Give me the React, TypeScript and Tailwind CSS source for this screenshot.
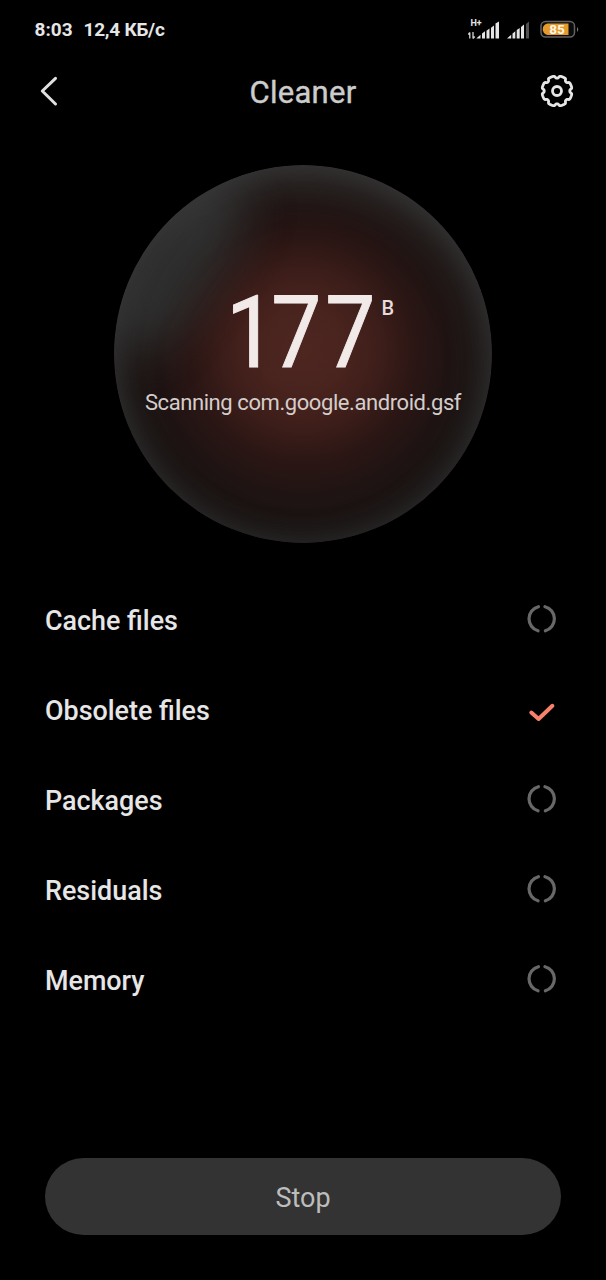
const items = [
    { name: "Cache files", done: false },
    { name: "Obsolete files", done: true },
    { name: "Packages", done: false },
    { name: "Residuals", done: false },
    { name: "Memory", done: false },
];

// Ring with eight wide teeth and narrow notches
function gearPath() {
    const points: string[] = [];
    for (let i = 0; i < 240; i++) {
        const a = (i / 240) * Math.PI * 2;
        const wave = Math.tanh((0.5 - Math.cos(a * 8)) * 3);
        const r = 13.9 + wave * 1.2;
        points.push(`${(18 + r * Math.sin(a)).toFixed(2)} ${(18 - r * Math.cos(a)).toFixed(2)}`);
    }
    return `M${points.join("L")}Z`;
}

function GearIcon() {
    return (
        <svg width="36" height="36" viewBox="0 0 36 36" fill="none" stroke="#e6e6e6" strokeWidth="2.8" strokeLinejoin="round">
            <path d={gearPath()} />
            <circle cx="18" cy="18" r="4.5" />
        </svg>
    );
}

function BackIcon() {
    return (
        <svg width="36" height="36" viewBox="0 0 36 36" fill="none" stroke="#e0e0e0" strokeWidth="3" strokeLinecap="round" strokeLinejoin="round">
            <path d="M24.5 5.3L11.3 18L24.5 31" />
        </svg>
    );
}

function SpinnerIcon() {
    return (
        <svg width="30" height="30" viewBox="0 0 30 30" fill="none" stroke="#686868" strokeWidth="3.2" strokeLinecap="round">
            <path d="M11.4 1.7A12.5 12.5 0 0 0 11 25.8" />
            <path d="M18 1.7A12.5 12.5 0 0 1 18.4 25.8" />
        </svg>
    );
}

function CheckIcon() {
    return (
        <svg width="30" height="30" viewBox="0 0 30 30" fill="none" stroke="#f9806b" strokeWidth="4">
            <path d="M4.3 17.5L11.6 24L25.4 10.8" strokeLinecap="round" strokeLinejoin="round" />
        </svg>
    );
}

function StatusIcons() {
    return (
        <svg width="116" height="28" viewBox="0 0 116 28" fill="#e4e4e4">
            <text x="2.5" y="10" fontSize="9" fontWeight="700" fontFamily="Roboto, sans-serif">H+</text>
            <path d="M1.8 22.5V16.5M0.3 18.5L1.8 16.5M5 16V22.5M5 22.5L6.7 20.5" fill="none" stroke="#d5d5d5" strokeWidth="1.3" />
            <path d="M8.3 22.5L12.5 18.8V22.5zM14 22.5V17.5L17 15.3V22.5zM18.5 22.5V14.8L21.5 12.5V22.5zM23 22.5V11.8L26 9.5V22.5zM27.5 22.5V7.5L31 5.5V22.5z" />
            <path d="M39 22.5L43.2 18.8V22.5zM44.5 22.5V17.5L47.3 15.3V22.5zM48.7 22.5V14L51.7 12V22.5zM53 22.5V11L56 8.5V22.5z" />
            <path d="M58 22.5V8L61 5.5V22.5z" fill="#505050" />
            <rect x="73" y="5.5" width="33.5" height="15.5" rx="4.5" fill="#0b0b0b" stroke="#626262" strokeWidth="1.5" />
            <path d="M79.5 7.5H100.5V19H79.5Q74.8 18 74.8 13.2Q74.8 8.5 79.5 7.5z" fill="#e59a2c" />
            <path d="M109 11Q111.5 13.5 109 16z" fill="#777" />
            <text x="89" y="18" fontSize="13.5" fontWeight="700" textAnchor="middle" fill="#fff6e5" fontFamily="Roboto, sans-serif">85</text>
        </svg>
    );
}

export default function App() {
    return (
        <div className="flex h-[1280px] w-[606px] flex-col bg-black font-[Roboto,sans-serif] text-[#e6e6e6]">
            <div className="flex h-[60px] items-center justify-between pl-[34.5px] pr-[22.5px]">
                <div className="flex gap-[11px] text-[19px] font-bold">
                    <span>8:03</span>
                    <span className="tracking-[-0.25px]">12,4 КБ/с</span>
                </div>
                <StatusIcons />
            </div>

            <div className="flex h-[62px] items-center justify-between px-[31px]">
                <BackIcon />
                <h1 className="pt-[4px] text-[31px] tracking-[0.3px] text-[#cccccc] [-webkit-text-stroke:0.4px_#cccccc]">Cleaner</h1>
                <GearIcon />
            </div>

            <div className="relative isolate mx-auto mt-[43px] flex size-[378px] shrink-0 flex-col items-center overflow-hidden rounded-full bg-[radial-gradient(circle_at_50%_49%,#4d2620_0%,#49231e_16%,#3e1e1a_28%,#2a1614_42%,#1f1413_54%,#191514_68%,#1c1a1a_100%)]">
                {/* soft reflection on the upper left of the glass */}
                <div className="absolute left-[-32px] top-[66px] -z-10 h-[70px] w-[190px] rotate-[-56deg] rounded-full bg-[#323434] opacity-90 blur-[24px]" />
                <div className="absolute inset-0 -z-10 rounded-full shadow-[inset_0_14px_40px_rgba(72,72,72,0.65),inset_0_-4px_26px_rgba(46,46,48,0.4)]" />
                <div className="mt-[118px] flex h-[100px] w-[160px] items-start">
                    <div className="ml-[3px] flex w-[147px] shrink-0 origin-left scale-x-[0.89] text-[100px] leading-[100px] text-[#f1eae8] [-webkit-text-stroke:1px_#f1eae8]">
                        <span className="tracking-[-5.5px]">1</span>
                        <span className="tracking-[4.5px]">77</span>
                    </div>
                    <span className="ml-[8.5px] mt-[13px] text-[20px] font-medium leading-6 text-[#e6dcda]">B</span>
                </div>
                <p className="mt-[6px] whitespace-nowrap text-[22px] leading-7 tracking-[-0.42px] text-[#d5cdcb]">Scanning com.google.android.gsf</p>
            </div>

            <ul className="mt-[32px] flex flex-col pl-[45px] pr-[49px]">
                {items.map((item) => (
                    <li key={item.name} className="flex h-[90px] items-center justify-between">
                        <span className="pt-[3px] text-[26.9px] font-medium">{item.name}</span>
                        {item.done ? <CheckIcon /> : <SpinnerIcon />}
                    </li>
                ))}
            </ul>

            <button className="mx-[45px] mb-[45px] mt-auto h-[77px] rounded-full bg-[#333333] pt-[3px] text-[27px] text-[#bdbdbd]">
                Stop
            </button>
        </div>
    );
}
